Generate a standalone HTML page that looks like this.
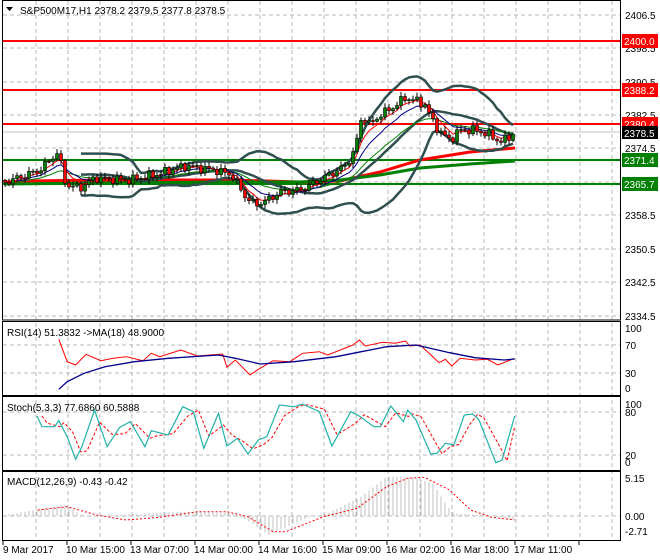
<!DOCTYPE html>
<html><head><meta charset="utf-8">
<style>
html,body{margin:0;padding:0;background:#fff;width:660px;height:560px;overflow:hidden}
svg{display:block}
text{font-family:"Liberation Sans",sans-serif;font-size:10px}
</style></head>
<body>
<svg id="c" width="660" height="560" viewBox="0 0 660 560" xmlns="http://www.w3.org/2000/svg">
<rect width="660" height="560" fill="#fff"/>
<g id="grid" stroke="#b8b8b8" stroke-dasharray="4,3" stroke-width="1"></g>
<g id="plot"></g>
<g fill="none" stroke="#000" stroke-width="1">
<rect x="2.5" y="0.5" width="618" height="319.5"/>
<rect x="2.5" y="321.5" width="618" height="74"/>
<rect x="2.5" y="396.5" width="618" height="74"/>
<rect x="2.5" y="471.5" width="618" height="69"/>
</g>
<text x="20" y="14" font-size="10">S&amp;P500M17,H1  2378.2 2379.5 2377.8 2378.5</text>
<path d="M6 7 L13 7 L9.5 11 Z" fill="#000"/>
<text x="7" y="336">RSI(14) 51.3832  -&gt;MA(18) 48.9000</text>
<text x="7" y="411">Stoch(5,3,3) 77.6860 60.5888</text>
<text x="7" y="485">MACD(12,26,9) -0.43 -0.42</text>
<g font-size="10" fill="#000">
<text x="625" y="19">2406.5</text>
<text x="625" y="52">2398.5</text>
<text x="625" y="86">2390.5</text>
<text x="625" y="119">2382.5</text>
<text x="625" y="152">2374.5</text>
<text x="625" y="219">2358.5</text>
<text x="625" y="253">2350.5</text>
<text x="625" y="286">2342.5</text>
<text x="625" y="320">2334.5</text>
<text x="625" y="332">100</text>
<text x="625" y="349">70</text>
<text x="625" y="377">30</text>
<text x="625" y="392">0</text>
<text x="625" y="408">100</text>
<text x="625" y="416">80</text>
<text x="625" y="459">20</text>
<text x="625" y="466">0</text>
<text x="625" y="482">5.15</text>
<text x="625" y="520">0.00</text>
<text x="625" y="535">-2.71</text>
</g>
<g>
<rect x="622" y="34" width="36" height="14" fill="#ff0000"/><text x="624" y="45" fill="#fff">2400.0</text>
<rect x="622" y="83" width="36" height="14" fill="#ff0000"/><text x="624" y="94" fill="#fff">2388.2</text>
<rect x="622" y="117" width="36" height="13" fill="#ff0000"/><text x="624" y="128" fill="#fff">2380.4</text>
<rect x="622" y="126" width="36" height="13" fill="#000"/><text x="624" y="137" fill="#fff">2378.5</text>
<rect x="622" y="153" width="36" height="14" fill="#008000"/><text x="624" y="164" fill="#fff">2371.4</text>
<rect x="622" y="177" width="36" height="14" fill="#008000"/><text x="624" y="188" fill="#fff">2365.7</text>
</g>
<g font-size="10">
<text x="3" y="553">9 Mar 2017</text>
<text x="66" y="553">10 Mar 15:00</text>
<text x="130" y="553">13 Mar 07:00</text>
<text x="194" y="553">14 Mar 00:00</text>
<text x="258" y="553">14 Mar 16:00</text>
<text x="322" y="553">15 Mar 09:00</text>
<text x="386" y="553">16 Mar 02:00</text>
<text x="450" y="553">16 Mar 18:00</text>
<text x="514" y="553">17 Mar 11:00</text>
</g>
</svg>
<script>
(function(){
var N=128,X=function(i){return 5+4*i;};
var P=function(y){return 2406.5-(y-15)/4.175;},Y=function(p){return 15+(2406.5-p)*4.175;};
var kp=[[3,183],[40,170],[58,152],[66,185],[80,188],[95,178],[130,180],[155,175],[185,166],[215,170],[232,175],[245,196],[255,205],[268,200],[280,192],[300,190],[320,180],[345,166],[355,150],[362,115],[370,125],[380,115],[392,108],[405,98],[415,100],[425,105],[432,120],[440,132],[450,140],[460,130],[475,130],[490,135],[500,142],[508,138],[515,132]];
function interp(k,x){if(x<=k[0][0])return k[0][1];for(var j=1;j<k.length;j++){if(x<=k[j][0]){var a=k[j-1],b=k[j];return a[1]+(b[1]-a[1])*(x-a[0])/(b[0]-a[0]);}}return k[k.length-1][1];}
var C=[],O=[],H=[],L=[];
for(var i=0;i<N;i++){var y=interp(kp,X(i))+3*Math.sin(i*1.7)+2*Math.sin(i*3.1);C.push(P(y));}
for(i=0;i<N;i++){O.push(i?C[i-1]:C[0]+0.5);var r1=0.3+0.8*Math.abs(Math.sin(i*2.3)),r2=0.3+0.8*Math.abs(Math.cos(i*1.3));H.push(Math.max(O[i],C[i])+r1);L.push(Math.min(O[i],C[i])-r2);}
var s='',g='';
for(var gx=36;gx<620;gx+=32){g+='<line x1="'+gx+'" y1="1" x2="'+gx+'" y2="540"/>';}
[15,48,82,115,148,182,215,249,282,316,345,373,412,455,516].forEach(function(v){g+='<line x1="3" y1="'+v+'" x2="620" y2="'+v+'"/>';});
document.getElementById('grid').innerHTML=g;
function path(arr,yf,start){var d='';for(var i=start||0;i<arr.length;i++){if(arr[i]==null||isNaN(arr[i]))continue;d+=(d?'L':'M')+X(i)+' '+yf(arr[i]).toFixed(1);}return d;}
function sma(a,n){var r=[];for(var i=0;i<a.length;i++){if(i<n-1||a[i-n+1]==null){r.push(null);continue;}var t=0;for(var k=0;k<n;k++)t+=a[i-k];r.push(t/n);}return r;}
function ema(a,n){var r=[],k=2/(n+1),e=a[0];for(var i=0;i<a.length;i++){e=i?a[i]*k+e*(1-k):a[0];r.push(e);}return r;}
function zp(pts,dx){var d='';pts.forEach(function(p,j){d+=(j?'L':'M')+(p[0]/2.38+(dx||0)).toFixed(1)+' '+(310+p[1]/3).toFixed(1);});return d;}
s+='<line x1="3" y1="132" x2="620" y2="132" stroke="#c0c0c0"/>';
[[41,'#ff0000'],[90,'#ff0000'],[124,'#ff0000'],[160,'#008000'],[184,'#008000']].forEach(function(l){s+='<line x1="3" y1="'+l[0]+'" x2="620" y2="'+l[0]+'" stroke="'+l[1]+'" stroke-width="2"/>';});
s+='<path d="M5 182 L30 181 L100 180 L230 180 L300 182 L340 181 L380 172 L420 160 L470 152 L515 148" fill="none" stroke="#ff0000" stroke-width="3"/>';
s+='<path d="M5 184 L100 183 L230 182 L300 182 L340 180 L380 175 L420 168 L470 164 L515 161" fill="none" stroke="#008000" stroke-width="3"/>';
var m=sma(C,20),up=[],dn=[];
for(i=0;i<N;i++){if(m[i]==null){up.push(null);dn.push(null);continue;}var v=0;for(var k=0;k<20;k++)v+=Math.pow(C[i-k]-m[i],2);var sd=Math.sqrt(v/20);up.push(m[i]+2*sd);dn.push(m[i]-2*sd);}
[up,dn,m].forEach(function(a){s+='<path d="'+path(a,Y)+'" fill="none" stroke="#2f4f4f" stroke-width="2.5"/>';});
s+='<path d="'+path(ema(C,21),Y,3)+'" fill="none" stroke="#008000" stroke-width="1"/>';
s+='<path d="'+path(ema(C,10),Y,3)+'" fill="none" stroke="#00008b" stroke-width="1"/>';
s+='<path d="'+path(ema(C,5),Y,3)+'" fill="none" stroke="#ff0000" stroke-width="1"/>';
for(i=0;i<N;i++){var x=X(i),bull=C[i]>=O[i];var t=Y(Math.max(O[i],C[i])),b=Y(Math.min(O[i],C[i]));
s+='<line x1="'+x+'" y1="'+Y(H[i]).toFixed(1)+'" x2="'+x+'" y2="'+Y(L[i]).toFixed(1)+'" stroke="#000"/>';
s+='<rect x="'+(x-1.5)+'" y="'+t.toFixed(1)+'" width="3" height="'+Math.max(1,b-t).toFixed(1)+'" fill="'+(bull?'#008000':'#ff0000')+'" stroke="#000" stroke-width="0.6"/>';}
// RSI
var rsiR=[[140,88],[160,155],[180,165],[205,133],[240,152],[270,145],[300,140],[340,152],[360,130],[380,140],[430,120],[470,138],[530,132],[540,172],[560,150],[595,195],[615,178],[650,152],[690,155],[720,130],[760,125],[780,135],[840,105],[855,90],[870,108],[910,97],[940,100],[965,93],[975,108],[1000,105],[1030,140],[1045,158],[1060,148],[1075,168],[1095,145],[1130,150],[1160,148],[1185,165],[1225,145]];
var rsiB=[[140,238],[160,215],[200,190],[250,170],[320,155],[400,145],[520,135],[560,145],[620,162],[700,155],[800,140],[860,125],[920,110],[990,105],[1070,128],[1130,143],[1200,150],[1225,147]];
s+='<path d="'+zp(rsiR)+'" fill="none" stroke="#ff0000"/>';
s+='<path d="'+zp(rsiB)+'" fill="none" stroke="#00008b" stroke-width="1.3"/>';
// Stoch
var st=[[88,318],[100,350],[130,350],[140,332],[160,380],[180,448],[195,410],[225,300],[255,410],[285,352],[310,335],[345,410],[360,362],[400,375],[435,290],[460,305],[485,415],[520,310],[540,408],[565,385],[590,432],[615,390],[635,380],[665,285],[700,290],[720,282],[760,305],[790,408],[835,305],[855,318],[890,350],[905,350],[930,288],[960,335],[970,300],[990,330],[1025,432],[1040,430],[1060,400],[1080,405],[1105,315],[1125,312],[1140,330],[1180,458],[1195,450],[1225,318]];
var sd2=[];for(i=0;i<st.length;i++){var a=st[Math.max(0,i-1)],b2=st[i];sd2.push([b2[0]+12,(a[1]+b2[1]*2)/3]);}
sd2[sd2.length-1]=[1225,350];
s+='<path d="'+zp(sd2)+'" fill="none" stroke="#ff0000" stroke-dasharray="3,2"/>';
s+='<path d="'+zp(st)+'" fill="none" stroke="#20b2aa" stroke-width="1.2"/>';
// MACD
var hk=[[10,615],[60,605],[150,583],[175,600],[200,620],[430,605],[560,610],[600,640],[640,675],[700,640],[740,620],[780,610],[860,560],[920,500],[980,500],[1030,520],[1060,580],[1080,610],[1150,615],[1225,630]];
for(i=0;i<N;i++){var xx=X(i);if(xx>515)break;var hy=310+interp(hk,xx*2.38)/3;s+='<line x1="'+xx+'" y1="516" x2="'+xx+'" y2="'+hy.toFixed(1)+'" stroke="#c0c0c0"/>';}
var sg=[[90,600],[160,590],[230,615],[300,630],[380,622],[470,605],[540,605],[590,620],[650,665],[680,665],[770,620],[850,595],[920,530],[970,505],[1010,502],[1070,540],[1120,600],[1170,622],[1225,630]];
s+='<path d="'+zp(sg)+'" fill="none" stroke="#ff0000" stroke-dasharray="2,2"/>';
for(var tx=3;tx<620;tx+=64){s+='<line x1="'+tx+'" y1="541" x2="'+tx+'" y2="545" stroke="#000"/>';}
document.getElementById('plot').innerHTML=s;
})();
</script>
</body></html>
